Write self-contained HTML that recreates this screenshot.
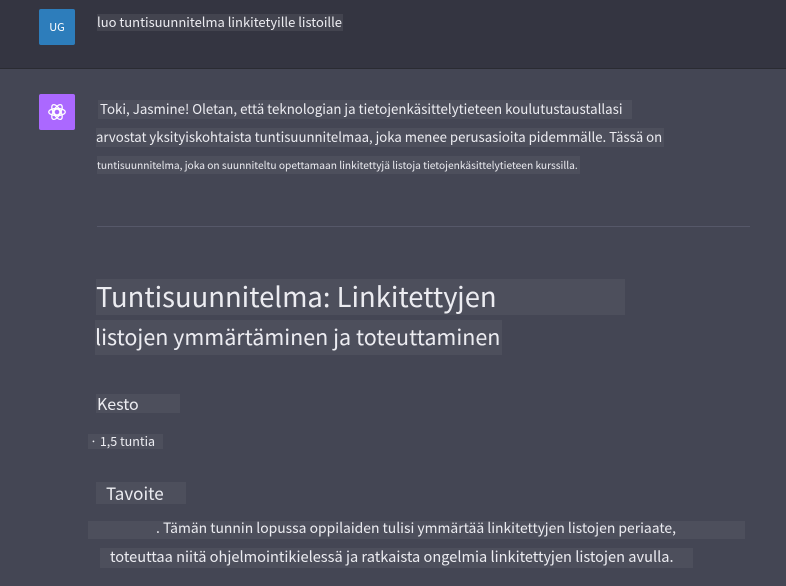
<!DOCTYPE html>
<html><head><meta charset="utf-8"><style>
*{margin:0;padding:0;box-sizing:border-box}
body{width:786px;height:586px;overflow:hidden;background:#444654;font-family:"Noto Sans CJK JP","Liberation Sans",sans-serif;color:#ececf1;position:relative}
.top{position:absolute;left:0;top:0;width:786px;height:69px;background:#343541;border-bottom:1px solid #2a2b32}
.b{position:absolute;background:#4d4f5c;white-space:nowrap;overflow:hidden;line-height:1}
.av{position:absolute;width:36px;height:36px;border-radius:2px;display:flex;align-items:center;justify-content:center}
</style></head><body>
<div class="top"></div>
<div class="av" style="left:39px;top:9px;background:#2d7dbb;color:#fff;font-size:11px">UG</div>
<div class="b" style="left:97px;top:14px;width:246px;height:17px;font-size:13px;padding-top:1px;background:#43444f">luo tuntisuunnitelma linkitetyille listoille</div>
<div class="av" style="left:39px;top:94px;background:#ab68ff">
<svg width="22" height="22" viewBox="0 0 24 24" fill="none" stroke="#fff" stroke-width="1.4"><circle cx="12" cy="12" r="3.2"/><ellipse cx="12" cy="12" rx="9" ry="4" transform="rotate(60 12 12)"/><ellipse cx="12" cy="12" rx="9" ry="4" transform="rotate(-60 12 12)"/><ellipse cx="12" cy="12" rx="9" ry="4"/></svg></div>
<div class="b" style="left:98px;top:100px;width:534px;height:19px;font-size:13.3px;padding:2px 0 0 2px">Toki, Jasmine! Oletan, että teknologian ja tietojenkäsittelytieteen koulutustaustallasi</div>
<div class="b" style="left:96px;top:128px;width:568px;height:19px;font-size:13.2px;padding-top:2px">arvostat yksityiskohtaista tuntisuunnitelmaa, joka menee perusasioita pidemmälle. Tässä on</div>
<div class="b" style="left:97px;top:156px;width:483px;height:18px;font-size:10.2px;padding-top:4px">tuntisuunnitelma, joka on suunniteltu opettamaan linkitettyjä listoja tietojenkäsittelytieteen kurssilla.</div>
<div style="position:absolute;left:97px;top:226px;width:653px;height:1px;background:#565869"></div>
<div class="b" style="left:96px;top:279px;width:529px;height:36px;font-size:27.4px;padding-top:3px">Tuntisuunnitelma: Linkitettyjen</div>
<div class="b" style="left:95px;top:320px;width:407px;height:35px;font-size:21.5px;padding-top:6px">listojen ymmärtäminen ja toteuttaminen</div>
<div class="b" style="left:96px;top:394px;width:84px;height:19px;font-size:16px;padding:1px 0 0 1px">Kesto</div>
<div class="b" style="left:88px;top:434px;width:75px;height:15px;font-size:12.5px;padding:1px 0 0 2px">· 1,5 tuntia</div>
<div class="b" style="left:96px;top:482px;width:90px;height:22px;font-size:17px;padding:2px 0 0 10px">Tavoite</div>
<div class="b" style="left:88px;top:521px;width:657px;height:18px;font-size:13.9px;padding:1px 0 0 68px">. Tämän tunnin lopussa oppilaiden tulisi ymmärtää linkitettyjen listojen periaate,</div>
<div class="b" style="left:100px;top:548px;width:593px;height:20px;font-size:14.6px;padding:2px 0 0 10px">toteuttaa niitä ohjelmointikielessä ja ratkaista ongelmia linkitettyjen listojen avulla.</div>
</body></html>
